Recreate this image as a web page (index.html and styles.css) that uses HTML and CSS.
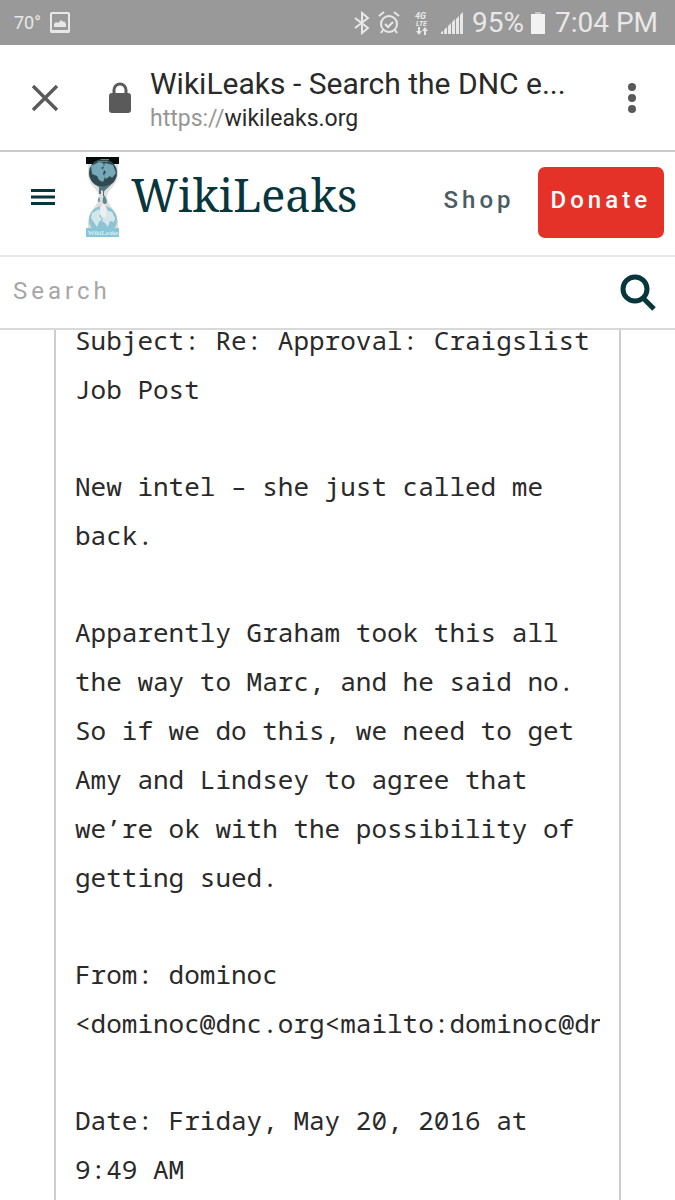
FILE: index.html
```html
<!DOCTYPE html>
<html lang="en">
<head>
<meta charset="utf-8">
<meta name="viewport" content="width=device-width, initial-scale=1">
<title>WikiLeaks - Search the DNC email database</title>
<link rel="stylesheet" href="styles.css">
</head>
<body>
<div class="status">
  <span class="temp">70°</span>
  <svg class="photo" width="20" height="22" viewBox="0 0 20 22"><rect x="1" y="1" width="18" height="19" rx="1" fill="none" stroke="currentColor" stroke-width="2"/><path d="M1 18h18v3H1z" fill="currentColor"/><path d="M4 15v-3l2-2 2 1 3-3 2 2 1-1 2 3v3z" fill="currentColor"/></svg>
  <span class="grow"></span>
  <svg width="16" height="24" viewBox="0 0 16 24" fill="none" stroke="currentColor" stroke-width="2"><path d="M1 7l13 10-6 5V2l6 5L1 17"/></svg>
  <svg class="alarm" width="22" height="24" viewBox="0 0 22 24" fill="none" stroke="currentColor" stroke-width="2"><circle cx="11" cy="13" r="8"/><path d="M7 13l3 3 5-5M1 5l5-4M21 5l-5-4M5 19l-2 3M17 19l2 3"/></svg>
  <svg class="lte" width="16" height="24" viewBox="0 0 16 24" fill="currentColor"><text x="1" y="8" class="lte-text">4G</text><text x="2" y="15" class="lte-text lte-small">LTE</text><path d="M4 16h2v4h2l-3 4-3-4h2zM10 24h2v-4h2l-3-4-3 4h2z"/></svg>
  <svg class="signal" width="24" height="24" viewBox="0 0 24 24" fill="currentColor"><path d="M1 21l2-1v3H1zM4 19l3-3v7H4zM8 15l3-3v11H8zM12 11l3-3v15h-3zM16 8l3-3v18h-3zM20 4l3-3v22h-3z"/></svg>
  <span class="percent">95%</span>
  <svg class="battery" width="16" height="24" viewBox="0 0 16 24"><path d="M5 1h6v3H5z" fill="#c4c4c4"/><path d="M1 3h14v20H1z" fill="#f2f2f2"/></svg>
  <time>7:04 PM</time>
</div>
<div class="toolbar">
  <button class="icon-button" aria-label="Close tab"><svg width="28" height="28" viewBox="0 0 28 28" fill="none" stroke="#5a5a5a" stroke-width="3.4"><path d="M2 2l24 24M26 2L2 26"/></svg></button>
  <svg class="lock" width="24" height="32" viewBox="0 0 24 32"><path d="M6 12V8a6 6 0 0 1 12 0v4" fill="none" stroke="#5a5a5a" stroke-width="3"/><rect x="1" y="11" width="22" height="20" rx="3" fill="#5a5a5a"/></svg>
  <div class="address">
    <div class="page-title">WikiLeaks - Search the DNC e...</div>
    <div class="url"><span class="scheme">https://</span>wikileaks.org</div>
  </div>
  <button class="icon-button" aria-label="More options"><svg width="8" height="32" viewBox="0 0 8 32" fill="#5a5a5a"><circle cx="4" cy="5" r="4"/><circle cx="4" cy="16" r="4"/><circle cx="4" cy="27" r="4"/></svg></button>
</div>
<header class="site-header">
  <button class="icon-button menu" aria-label="Menu"><svg width="24" height="16" viewBox="0 0 24 16" fill="#07363d"><path d="M0 0h24v3H0zM0 6.5h24v3H0zM0 13h24v3H0z"/></svg></button>
  <a class="brand" href="#">
    <svg width="34" height="80" viewBox="0 0 34 80">
      <path d="M2 7h30v9c0 13-11 16-11 24s10 13 11 25v7H2v-7c1-12 11-17 11-25S2 29 2 16z" fill="#dedede"/>
      <path d="M0 0h33v7H0z" fill="#050a0b"/>
      <circle cx="17" cy="16" r="14" fill="#304a51"/>
      <path d="M5 9l8-4 4 1 1 3-3 2 3 2-1 4 2 3-2 5-4-2-2-4-5-2zM19 6l8 2 3 8-4 5-2-2-4 3-2-4 2-3-3-3z" fill="#76a8b7"/>
      <path d="M12 4h10v1H12zM15 2h8v1h-8z" fill="#65818a"/>
      <path d="M9 27c5 4 12 3 17-1-3 5-7 6-8 9v4h-1v-5l-2-1v4h-2v-7z" fill="#55737c"/>
      <path d="M18 38c3 4 4 9 1 9s-3-4-1-9z" fill="#5f8792"/><path d="M13 40c2 3 1 5 0 5s-2-2 0-5z" fill="#7799a2"/>
      <circle cx="17" cy="63" r="14" fill="#8fc3d3"/>
      <path d="M6 56l7-4 2 4-2 3 3 3-3 3-2 5-4-6-2-3zM20 53l6 2 3 6-1 4-4-1-2 6-3-4-3-2 2-6z" fill="#d3e7ec"/>
      <path d="M14 50l4-3 3 5-1 8-4 1-2-4z" fill="#eeeeee"/>
      <path d="M0 71h33v9H0z" fill="#86c8d9"/>
      <text x="17" y="78" text-anchor="middle" class="logo-label">WikiLeaks</text>
    </svg>
    <span class="wordmark">WikiLeaks</span>
  </a>
  <a class="shop" href="#">Shop</a>
  <a class="donate" href="#">Donate</a>
</header>
<form class="search">
  <input type="search" aria-label="Search" placeholder="Search">
  <button type="button" class="icon-button" aria-label="Submit search"><svg width="37" height="38" viewBox="0 0 37 38" fill="none" stroke="#07363d"><circle cx="15" cy="15" r="12" stroke-width="5"/><path d="M23 24l11 11" stroke-width="5"/></svg></button>
</form>
<main>
  <article class="mail">
    <p>Subject: Re: Approval: Craigslist Job Post</p>
    <p>New intel – she just called me back.</p>
    <p>Apparently Graham took this all the way to Marc, and he said no. So if we do this, we need to get Amy and Lindsey to agree that we’re ok with the possibility of getting sued.</p>
    <p>From: dominoc &lt;dominoc@dnc.org&lt;mailto:dominoc@dnc.org&gt;&gt;</p>
    <p>Date: Friday, May 20, 2016 at 9:49&nbsp;AM</p>
  </article>
</main>
</body>
</html>
```
FILE: styles.css
```css
* { box-sizing: border-box; }
body {
  margin: 0;
  height: 100vh;
  display: flex;
  flex-direction: column;
  overflow: hidden;
  background: #fff;
  color: #2a2a2a;
  font-family: Roboto, sans-serif;
}
svg { display: block; flex: none; }
a { text-decoration: none; }
.icon-button { padding: 0; border: 0; background: none; flex: none; }
.status {
  flex: none;
  display: flex;
  align-items: center;
  height: 45px;
  padding: 0 17px 0 14px;
  background: #999;
  color: #e8e8e8;
  font-size: 28px;
}
.temp { font-size: 18px; width: 36px; }
.grow { flex: 1; }
.alarm { margin-left: 8px; }
.lte { margin-left: 14px; }
.lte-text { font: italic bold 9px Roboto, sans-serif; }
.lte-small { font-size: 7px; }
.signal { margin-left: 10px; }
.percent { margin-left: 8px; }
.battery { margin: 0 9px 0 6px; }
.toolbar {
  flex: none;
  display: flex;
  align-items: center;
  height: 107px;
  padding: 0 39px 0 31px;
  border-bottom: 2px solid #c9c9c9;
}
.lock { margin: 0 18px 0 49px; }
.address { flex: 1; min-width: 0; padding-top: 4px; }
.page-title { font-size: 30px; line-height: 38px; white-space: nowrap; }
.url { font-size: 23px; line-height: 32px; }
.scheme { color: #969696; }
.site-header {
  flex: none;
  display: flex;
  align-items: center;
  height: 105px;
  padding: 0 11px 0 31px;
  border-bottom: 2px solid #e9e9e9;
}
.menu { margin: 0 31px 14px 0; }
.brand { display: flex; gap: 11px; flex: 1; padding-bottom: 14px; }
.logo-label { font: 7px "Liberation Serif", serif; fill: #eef8fa; }
.wordmark { color: #07363d; font: 45px/76px "Noto Serif", "Droid Serif", "DejaVu Serif", serif; }
.shop, .donate { font-size: 24px; font-weight: 500; letter-spacing: 4px; }
.shop { color: #4a5d65; margin: 0 23px 8px 0; }
.donate {
  padding: 0 13px 4px;
  border-radius: 7px;
  background: #e53229;
  color: #fff;
  line-height: 67px;
  margin-bottom: 2px;
}
.search {
  flex: none;
  display: flex;
  align-items: center;
  height: 73px;
  padding: 1px 18px 0 13px;
  border-bottom: 2px solid #d9d9d9;
}
.search input {
  flex: 1;
  min-width: 0;
  padding: 0 0 4px;
  border: 0;
  outline: 0;
  background: none;
  font: 24px/32px Roboto, sans-serif;
  letter-spacing: 4px;
}
.search input::placeholder { color: #a6a6a6; }
main { flex: 1; min-height: 0; overflow: hidden; padding: 0 54px; }
.mail {
  display: flex;
  flex-direction: column;
  gap: 48px;
  min-height: 100%;
  margin-top: -14px;
  padding: 0 19px 20px;
  border: 2px solid #ccc;
  border-width: 0 2px;
  font: 26px/49px "Droid Sans Mono", "Noto Sans Mono", "DejaVu Sans Mono", monospace;
}
.mail p { margin: 0; overflow: hidden; }
```
